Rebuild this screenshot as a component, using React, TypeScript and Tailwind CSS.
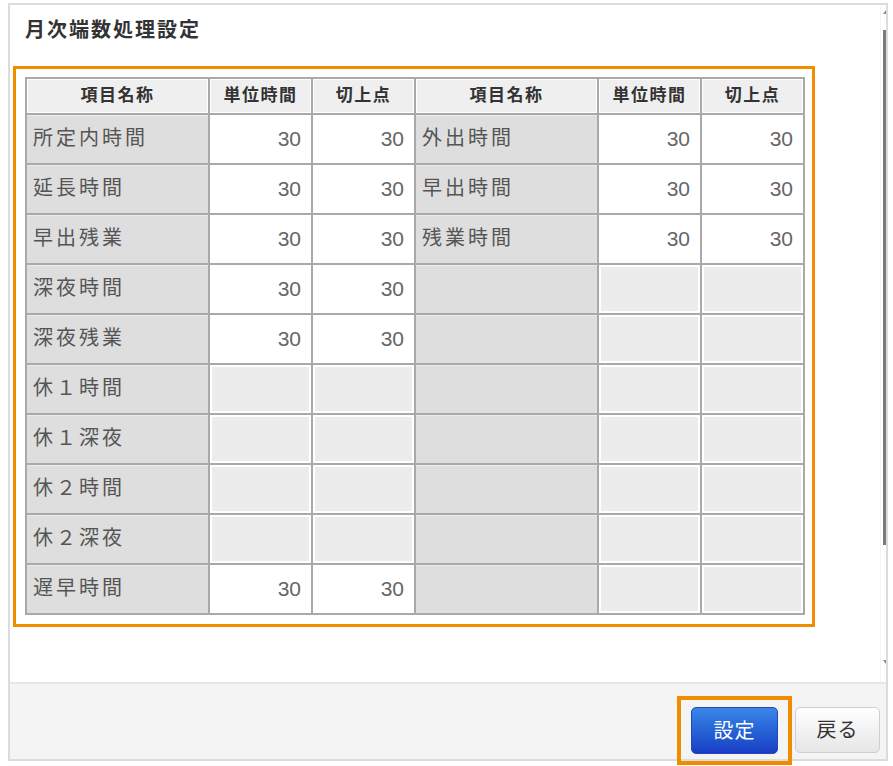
import React from "react";

type Row = { name: string; a: string; b: string };

const left: Row[] = [
  { name: "所定内時間", a: "30", b: "30" },
  { name: "延長時間", a: "30", b: "30" },
  { name: "早出残業", a: "30", b: "30" },
  { name: "深夜時間", a: "30", b: "30" },
  { name: "深夜残業", a: "30", b: "30" },
  { name: "休１時間", a: "", b: "" },
  { name: "休１深夜", a: "", b: "" },
  { name: "休２時間", a: "", b: "" },
  { name: "休２深夜", a: "", b: "" },
  { name: "遅早時間", a: "30", b: "30" },
];

const right: Row[] = [
  { name: "外出時間", a: "30", b: "30" },
  { name: "早出時間", a: "30", b: "30" },
  { name: "残業時間", a: "30", b: "30" },
  { name: "", a: "", b: "" },
  { name: "", a: "", b: "" },
  { name: "", a: "", b: "" },
  { name: "", a: "", b: "" },
  { name: "", a: "", b: "" },
  { name: "", a: "", b: "" },
  { name: "", a: "", b: "" },
];

const font = { fontFamily: '"Liberation Sans", "Noto Sans CJK JP", sans-serif' };

function Header({ label }: { label: string }) {
  return (
    <div className="bg-[#efefef] flex items-center justify-center text-[17px] font-bold text-[#333] tracking-[1.5px] border border-white">
      {label}
    </div>
  );
}

function NameCell({ name }: { name: string }) {
  return (
    <div className="bg-[#dedede] flex items-center pl-[6px] pb-[4px] text-[20px] text-[#555] tracking-[3px] border-t border-[#ececec]">
      {name}
    </div>
  );
}

function ValueCell({ v }: { v: string }) {
  if (v === "") {
    return (
      <div className="bg-white p-[2px]">
        <div className="bg-[#ececec] h-full w-full" />
      </div>
    );
  }
  return (
    <div className="bg-white flex items-center justify-end pr-[10px] text-[21px] text-[#666]">
      {v}
    </div>
  );
}

export default function App() {
  return (
    <div className="w-[893px] h-[766px] bg-white overflow-hidden relative" style={font}>
      <div className="ml-[8px] mt-[3px] w-[880px] h-[758px] border-2 border-[#dcdcdc] flex flex-col">
        <div className="flex h-[677px] shrink-0">
          <div className="flex-1 flex flex-col">
            <div className="pl-[15px] pt-[11px] h-[61px] text-[20px] leading-[28px] font-bold text-[#333] tracking-[2px]">
              月次端数処理設定
            </div>
            <div className="ml-[3px] w-[802px] h-[561px] border-[3px] border-[#f08c00] pt-[8px] pl-[9px]">
              <div className="grid grid-cols-[181px_101px_101px_181px_101px_101px] grid-rows-[34px_repeat(10,48px)] gap-[2px] p-[2px] bg-[#a9a9a9] w-[780px]">
                <Header label="項目名称" />
                <Header label="単位時間" />
                <Header label="切上点" />
                <Header label="項目名称" />
                <Header label="単位時間" />
                <Header label="切上点" />
                {left.map((l, i) => {
                  const r = right[i];
                  return (
                    <React.Fragment key={i}>
                      <NameCell name={l.name} />
                      <ValueCell v={l.a} />
                      <ValueCell v={l.b} />
                      <NameCell name={r.name} />
                      <ValueCell v={r.a} />
                      <ValueCell v={r.b} />
                    </React.Fragment>
                  );
                })}
              </div>
            </div>
          </div>
          <div className="w-[6px] flex flex-col items-end border-l border-[#f4f4f4]">
            <div className="mt-[5px] w-0 h-0 border-l-[3px] border-b-[4px] border-l-transparent border-b-[#888]" />
            <div className="mt-[16px] w-[3px] h-[515px] bg-[#7a7a7a]" />
            <div className="flex-1" />
            <div className="mb-[18px] w-0 h-0 border-l-[3px] border-t-[4px] border-l-transparent border-t-[#888]" />
          </div>
        </div>
        <div className="h-[77px] min-h-0 shrink-0 bg-[#f4f4f4] border-t-2 border-[#e6e6e6] flex justify-end items-start pt-[12px] pr-[6px] overflow-visible">
          <div className="shrink-0 border-4 border-[#f08c00] px-[10px] pt-[7px] pb-[7px] h-[69px]">
            <button className="w-[87px] h-[47px] rounded-[5px] bg-gradient-to-b from-[#3a86e8] to-[#1b3dc4] border border-[#2347b8] text-white text-[20px] tracking-[1px]">
              設定
            </button>
          </div>
          <button className="shrink-0 ml-[3px] mt-[11px] w-[85px] h-[46px] rounded-[5px] bg-gradient-to-b from-white to-[#e6e6e6] border border-[#cfcfcf] text-[#333] text-[20px] tracking-[1px]">
            戻る
          </button>
        </div>
      </div>
    </div>
  );
}
